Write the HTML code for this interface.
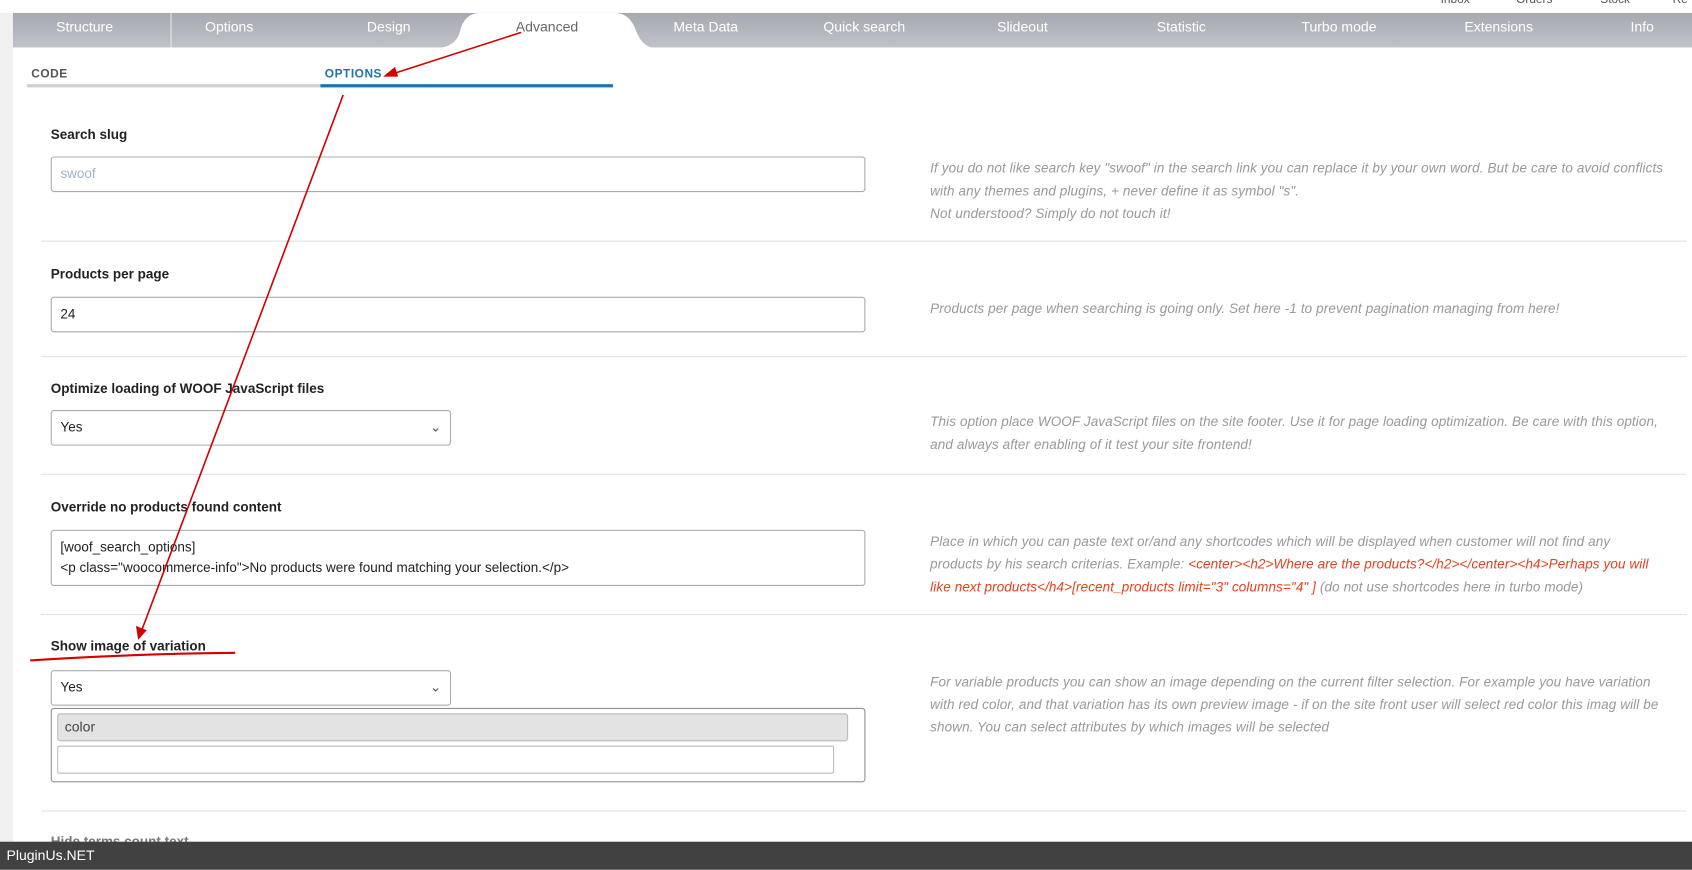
<!DOCTYPE html>
<html><head><meta charset="utf-8"><style>
html,body{margin:0;padding:0;width:1692px;height:870px;overflow:hidden;background:#fff;font-family:"Liberation Sans",sans-serif}
#w{position:absolute;left:0;top:0;width:1568px;height:806px;transform:scale(1.0791);transform-origin:0 0;background:#fff}
.abs{position:absolute}
.tabs{left:12px;top:12px;width:1556px;height:32px;background:linear-gradient(#a6aab0,#bfc3c9)}
.tab{position:absolute;top:17px;color:#fff;font-size:13px}
.lbl{position:absolute;left:47px;font-size:12.5px;font-weight:bold;color:#222}
.inp{position:absolute;left:47px;border:1px solid #aaa;border-radius:3px;background:#fff;font-size:12.5px;color:#222;box-sizing:border-box;padding-left:8px}
.desc{position:absolute;left:862px;width:680px;font-size:12.5px;line-height:21px;font-style:italic;color:#999;letter-spacing:.1px}
.sep{position:absolute;left:38px;width:1525px;height:1px;background:#e2e2e2}
.red{color:#e8401c}
</style></head><body><div id="w">
<div class="abs" style="left:0;top:12px;width:12px;height:770px;background:#f0f0f0"></div>
<div class="abs" style="top:-6px;left:1335px;font-size:11px;color:#555">Inbox</div>
<div class="abs" style="top:-6px;left:1405px;font-size:11px;color:#555">Orders</div>
<div class="abs" style="top:-6px;left:1483px;font-size:11px;color:#555">Stock</div>
<div class="abs" style="top:-6px;left:1550px;font-size:11px;color:#555">Re</div>
<div class="abs tabs"></div>
<div class="abs" style="left:158px;top:12px;width:1px;height:32px;background:#e5e7ea"></div>
<svg class="abs" style="left:400px;top:12px" width="210" height="33"><path d="M0 33 Q22 33 26 18 Q30 0 45 0 L170 0 Q184 0 190 18 Q196 33 210 33 Z" fill="#fff"/></svg>
<div class="tab" style="left:52px">Structure</div>
<div class="tab" style="left:190px">Options</div>
<div class="tab" style="left:340px">Design</div>
<div class="tab" style="left:478px;color:#666">Advanced</div>
<div class="tab" style="left:624px">Meta Data</div>
<div class="tab" style="left:763px">Quick search</div>
<div class="tab" style="left:924px">Slideout</div>
<div class="tab" style="left:1072px">Statistic</div>
<div class="tab" style="left:1206px">Turbo mode</div>
<div class="tab" style="left:1357px">Extensions</div>
<div class="tab" style="left:1511px">Info</div>
<div class="abs" style="left:29px;top:63px;font-size:11px;font-weight:bold;color:#555;letter-spacing:.5px">CODE</div>
<div class="abs" style="left:301px;top:63px;font-size:11px;font-weight:bold;color:#1e73a8;letter-spacing:.5px">OPTIONS</div>
<div class="abs" style="left:25px;top:78px;width:272px;height:3px;background:#d0d0d0"></div>
<div class="abs" style="left:297px;top:78px;width:271px;height:3px;background:#1e73a8"></div>

<div class="lbl" style="top:118px">Search slug</div>
<div class="inp" style="top:145px;width:755px;height:33px;line-height:31px;color:#9fb3c8">swoof</div>
<div class="desc" style="top:146px">If you do not like search key "swoof" in the search link you can replace it by your own word. But be care to avoid conflicts with any themes and plugins, + never define it as symbol "s".<br>Not understood? Simply do not touch it!</div>
<div class="sep" style="top:223px"></div>

<div class="lbl" style="top:247px">Products per page</div>
<div class="inp" style="top:275px;width:755px;height:33px;line-height:31px">24</div>
<div class="desc" style="top:276px">Products per page when searching is going only. Set here -1 to prevent pagination managing from here!</div>
<div class="sep" style="top:330px"></div>

<div class="lbl" style="top:353px">Optimize loading of WOOF JavaScript files</div>
<div class="inp" style="top:380px;width:371px;height:33px;line-height:31px">Yes<span style="position:absolute;right:8px;top:0;color:#555">&#8964;</span></div>
<div class="desc" style="top:381px">This option place WOOF JavaScript files on the site footer. Use it for page loading optimization. Be care with this option, and always after enabling of it test your site frontend!</div>
<div class="sep" style="top:439px"></div>

<div class="lbl" style="top:463px">Override no products found content</div>
<div class="inp" style="top:491px;width:755px;height:52px;line-height:19px;padding-top:6px">[woof_search_options]<br>&lt;p class="woocommerce-info"&gt;No products were found matching your selection.&lt;/p&gt;</div>
<div class="desc" style="top:492px">Place in which you can paste text or/and any shortcodes which will be displayed when customer will not find any products by his search criterias. Example: <span class="red">&lt;center&gt;&lt;h2&gt;Where are the products?&lt;/h2&gt;&lt;/center&gt;&lt;h4&gt;Perhaps you will like next products&lt;/h4&gt;[recent_products limit="3" columns="4" ]</span> (do not use shortcodes here in turbo mode)</div>
<div class="sep" style="top:569px"></div>

<div class="lbl" style="top:592px">Show image of variation</div>
<div class="inp" style="top:621px;width:371px;height:33px;line-height:31px">Yes<span style="position:absolute;right:8px;top:0;color:#555">&#8964;</span></div>
<div class="inp" style="top:656px;width:755px;height:69px;border-color:#8a929c"></div>
<div class="abs" style="left:53px;top:661px;width:733px;height:26px;background:#e3e3e3;border:1px solid #bbb;border-radius:3px;box-sizing:border-box;font-size:13px;color:#444;padding-left:6px;line-height:24px">color</div>
<div class="abs" style="left:53px;top:691px;width:720px;height:26px;border:1px solid #bbb;border-radius:2px;box-sizing:border-box;background:#fff"></div>
<div class="desc" style="top:622px">For variable products you can show an image depending on the current filter selection. For example you have variation with red color, and that variation has its own preview image - if on the site front user will select red color this imag will be shown. You can select attributes by which images will be selected</div>
<div class="sep" style="top:751px"></div>
<div class="lbl" style="top:773px;color:#777">Hide terms count text</div>

<svg class="abs" style="left:0;top:0" width="1568" height="806">
<g stroke="#d40000" stroke-width="1.5" fill="#d40000">
<line x1="483" y1="30" x2="362" y2="69"/><polygon points="355,71 366,62 369,71" stroke="none"/>
<line x1="318" y1="88" x2="131" y2="585"/><polygon points="128,593 126,580 136,584" stroke="none"/>
<path d="M28 612 Q120 606 218 605" fill="none" stroke-width="2"/>
</g></svg>
<div class="abs" style="left:0;top:780px;width:1568px;height:26px;background:#414141;color:#fff;font-size:13px;line-height:26px;padding-left:6px;box-sizing:border-box">PluginUs.NET</div>
</div></body></html>
